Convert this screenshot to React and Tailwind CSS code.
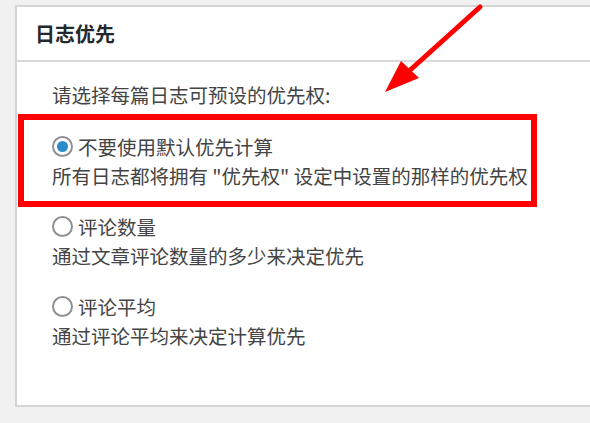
import React from 'react';

const options = [
  {
    label: '不要使用默认优先计算',
    desc: '所有日志都将拥有 "优先权" 设定中设置的那样的优先权',
    checked: true,
  },
  {
    label: '评论数量',
    desc: '通过文章评论数量的多少来决定优先',
    checked: false,
  },
  {
    label: '评论平均',
    desc: '通过评论平均来决定计算优先',
    checked: false,
  },
];

const Radio = ({ checked }) => (
  <span className="w-[21px] h-[21px] min-w-[21px] rounded-full border-2 border-[#8c8f94] bg-white flex items-center justify-center shrink-0">
    {checked && <span className="w-[11px] h-[11px] rounded-full bg-[#2a8bc9]" />}
  </span>
);

const App = () => {
  return (
    <div
      className="relative w-[590px] h-[423px] overflow-hidden bg-[#f1f1f1] pl-[15px] pt-[5px]"
      style={{ fontFamily: '"Noto Sans CJK SC", "Noto Sans", sans-serif' }}
    >
      {/* Settings panel */}
      <div className="h-[402px] bg-white border-2 border-r-0 border-[#d4d4d4]">
        <div className="h-[55px] border-b-2 border-[#d9d9d9] flex items-center pl-[18px]">
          <h2 className="text-[20px] font-bold text-[#23282d] leading-none">日志优先</h2>
        </div>

        <div className="pl-[35px] pt-[18px] text-[19.5px] text-[#444] leading-[29px]">
          <p>请选择每篇日志可预设的优先权:</p>

          <div className="mt-[23px] flex flex-col gap-[22px]">
            {options.map((opt, i) => (
              <div key={i}>
                <label className="flex items-center gap-[5px] h-[29px]">
                  <Radio checked={opt.checked} />
                  <span>{opt.label}</span>
                </label>
                <p>{opt.desc}</p>
              </div>
            ))}
          </div>
        </div>
      </div>

      {/* Annotation: highlight box */}
      <div className="absolute left-[18px] top-[114px] w-[519px] h-[93px] border-[6px] border-[#ff0000]" />

      {/* Annotation: arrow */}
      <svg className="absolute left-0 top-0" width="590" height="423" viewBox="0 0 590 423">
        <line x1="480" y1="7" x2="408" y2="72" stroke="#ff0000" strokeWidth="5" strokeLinecap="round" />
        <polygon points="385,92 401,61 419,78" fill="#ff0000" />
      </svg>
    </div>
  );
};

export default App;
